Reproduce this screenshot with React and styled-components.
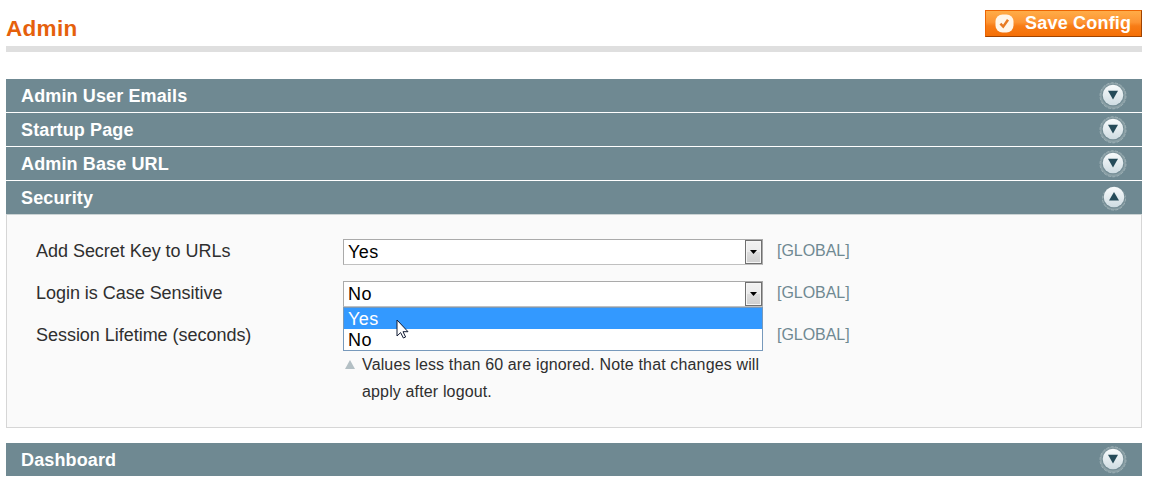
import React from "react";
import styled, { createGlobalStyle } from "styled-components";

const Global = createGlobalStyle`
  * { box-sizing: border-box; }
  body { margin: 0; background: #fff; font-family: "Liberation Sans", Arial, sans-serif; }
`;

const Page = styled.main`
  width: 1150px;
  height: 481px;
  padding: 10px 8px 0 6px;
  overflow: hidden;
`;

const Header = styled.header`
  display: flex;
  justify-content: space-between;
  align-items: flex-start;
  height: 42px;
  margin-bottom: 27px;
  border-bottom: 6px solid #dfdfdf;
`;

const Title = styled.h1`
  margin: 5px 0 0;
  font-size: 22.5px;
  letter-spacing: 0.3px;
  line-height: 28px;
  color: #e5600b;
`;

const SaveButton = styled.button`
  display: flex;
  align-items: center;
  gap: 11px;
  width: 157px;
  height: 27px;
  padding: 0 0 0 9px;
  border: 1px solid;
  border-color: #ed6502 #a04300 #a04300 #ed6502;
  background: linear-gradient(#ffac47 0, #fd9433 45%, #f77c16 60%, #f56f06 100%);
  color: #fff;
  font: bold 18px/24px "Liberation Sans", Arial, sans-serif;
  letter-spacing: 0.2px;
  white-space: nowrap;
`;

const ButtonText = styled.span`
  padding-bottom: 2px;
`;

const Bars = styled.div`
  display: flex;
  flex-direction: column;
  gap: 1px;
`;

const Bar = styled.div`
  display: flex;
  align-items: center;
  justify-content: space-between;
  height: 33px;
  padding: 0 ${(p) => (p.$open ? 13.5 : 14.5)}px 0 15px;
  background: #6f8992;
  color: #fff;
  font-size: 18px;
  font-weight: bold;
  letter-spacing: 0.13px;
`;

const BarTitle = styled.span`
  padding-top: 2px;
`;

const Panel = styled.section`
  height: 214px;
  margin-bottom: 15px;
  padding: 24px 0 0 29px;
  border: 1px solid #d6d6d6;
  border-top-color: #cbd3d4;
  background: #fafafa;
`;

const Field = styled.div`
  display: grid;
  grid-template-columns: 307px 420px auto;
  height: ${(p) => p.$height || 42}px;
`;

const Label = styled.label`
  font-size: 18px;
  line-height: 24px;
  letter-spacing: -0.03px;
  color: #2f2f2f;
`;

const Scope = styled.span`
  padding-left: 14px;
  font-size: 16px;
  line-height: 23px;
  letter-spacing: -0.05px;
  color: #6f8992;
`;

const SelectWrap = styled.div`
  position: relative;
  letter-spacing: 0.5px;
`;

const SelectBox = styled.div`
  display: flex;
  justify-content: space-between;
  height: 26px;
  padding: 1px 0 1px 4px;
  border: 1px solid #aaa;
  border-bottom-color: #c0c0c0;
  background: #fff;
  color: #000;
  font-size: 18px;
  line-height: 23px;
`;

const Arrow = styled.span`
  display: flex;
  align-items: center;
  justify-content: center;
  width: 17px;
  height: 24px;
  margin-top: -1px;
  border: 1px solid #707070;
  background: linear-gradient(#f2f2f2 0, #ebebeb 48%, #dddddd 52%, #cfcfcf 100%);
  box-shadow: inset 0 0 0 1px #f5f5f5;
`;

const Menu = styled.div`
  position: absolute;
  z-index: 1;
  top: 26px;
  left: 0;
  width: 420px;
  height: 44px;
  border: 1px solid #7799bb;
  background: #fff;
`;

const Option = styled.div`
  height: 21px;
  padding-left: 4px;
  background: ${(p) => (p.$active ? "#3399ff" : "#fff")};
  color: ${(p) => (p.$active ? "#fff" : "#000")};
  font-size: 18px;
  line-height: 22px;
`;

const Cursor = styled.svg`
  position: absolute;
  top: 11px;
  left: 52px;
`;

const Note = styled.div`
  display: flex;
  align-items: flex-start;
  gap: 7px;
  padding: 28px 0 0 2px;
  color: #2f2f2f;
  font-size: 16px;
  line-height: 27px;
  letter-spacing: 0.145px;
  white-space: nowrap;

  svg { margin-top: 9px; }
  p { margin: 0; }
`;

const CheckIcon = () => (
  <svg width="19" height="19" viewBox="0 0 19 19">
    <rect x="0.5" y="0.5" width="18" height="18" rx="7" fill="#fff6ea" />
    <path d="M5.4 9.6 8.2 12.6 13 5.8" fill="none" stroke="#e87a22" strokeWidth="2.5" />
  </svg>
);

const ToggleIcon = ({ up }) => (
  <svg width="30" height="30" viewBox="0 0 30 30">
    <defs>
      <linearGradient id="knob" x1="0" y1="0" x2="0" y2="1">
        <stop offset="0" stopColor="#f8fbfc" />
        <stop offset="1" stopColor="#cfdce2" />
      </linearGradient>
    </defs>
    <circle cx="15" cy={up ? 15.6 : 14.8} r={up ? 11.5 : 13} fill="#8ba0a6" stroke="#9db0b5" strokeWidth="1" strokeDasharray="3 1.5" />
    <circle cx="15" cy="14.4" r="11.2" fill="#647f88" opacity=".6" />
    <circle cx="15" cy="14" r="10.3" fill="url(#knob)" />
    <path d={up ? "M10 17.5h10l-5-8.5z" : "M10 9.8h10l-5 8.7z"} fill="#254b59" />
  </svg>
);

function Select({ value, children }) {
  return (
    <SelectWrap>
      <SelectBox>
        {value}
        <Arrow>
          <svg width="7" height="4" viewBox="0 0 7 4"><path d="M0 0h7L3.5 4z" /></svg>
        </Arrow>
      </SelectBox>
      {children}
    </SelectWrap>
  );
}

function Section({ title, open }) {
  return (
    <Bar $open={open}>
      <BarTitle>{title}</BarTitle>
      <ToggleIcon up={open} />
    </Bar>
  );
}

export default function App() {
  return (
    <Page>
      <Global />
      <Header>
        <Title>Admin</Title>
        <SaveButton><CheckIcon /><ButtonText>Save Config</ButtonText></SaveButton>
      </Header>
      <Bars>
        <Section title="Admin User Emails" />
        <Section title="Startup Page" />
        <Section title="Admin Base URL" />
        <Section title="Security" open />
      </Bars>
      <Panel>
        <Field>
          <Label>Add Secret Key to URLs</Label>
          <Select value="Yes" />
          <Scope>[GLOBAL]</Scope>
        </Field>
        <Field>
          <Label>Login is Case Sensitive</Label>
          <Select value="No">
            <Menu>
              <Option $active>Yes</Option>
              <Option>No</Option>
              <Cursor width="13" height="20" viewBox="0 0 13 20">
                <path d="M1 1v16l3.6-3.4 2.8 5.4 2.2-1-2.6-5.3h5z" fill="#fff" stroke="#111a33" />
              </Cursor>
            </Menu>
          </Select>
          <Scope>[GLOBAL]</Scope>
        </Field>
        <Field $height={90}>
          <Label>Session Lifetime (seconds)</Label>
          <Note>
            <svg width="10" height="9" viewBox="0 0 10 9"><path d="M0 9h10L5 0z" fill="#b3bfc4" /></svg>
            <p>Values less than 60 are ignored. Note that changes will<br />apply after logout.</p>
          </Note>
          <Scope>[GLOBAL]</Scope>
        </Field>
      </Panel>
      <Section title="Dashboard" />
    </Page>
  );
}
